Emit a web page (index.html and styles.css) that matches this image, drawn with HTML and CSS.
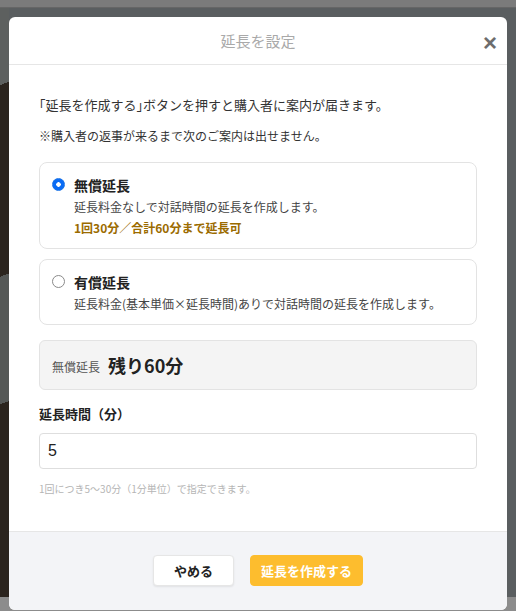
FILE: index.html
```html
<!DOCTYPE html>
<html lang="ja">
<head>
    <meta charset="UTF-8">
    <meta name="viewport" content="width=device-width, initial-scale=1.0">
    <title>延長を設定</title>
    <link rel="stylesheet" href="styles.css">
</head>
<body>
    <div class="backdrop">
        <div class="modal">
            <div class="modal-header">
                <h2>延長を設定</h2>
                <button class="close" aria-label="閉じる">&times;</button>
            </div>

            <div class="modal-body">
                <p class="lead"><span class="half">「</span>延長を作成する<span class="half">」</span>ボタンを押すと購入者に案内が届きます。</p>
                <p class="note">※購入者の返事が来るまで次のご案内は出せません。</p>

                <label class="option">
                    <input type="radio" name="kind" checked>
                    <span class="radio"></span>
                    <span class="option-text">
                        <span class="option-title">無償延長</span>
                        <span class="option-desc">延長料金なしで対話時間の延長を作成します。</span>
                        <span class="option-limit">1回30分／合計60分まで延長可</span>
                    </span>
                </label>

                <label class="option">
                    <input type="radio" name="kind">
                    <span class="radio"></span>
                    <span class="option-text">
                        <span class="option-title">有償延長</span>
                        <span class="option-desc">延長料金(基本単価×延長時間)ありで対話時間の延長を作成します。</span>
                    </span>
                </label>

                <div class="remain">
                    <span class="remain-label">無償延長</span>
                    <span class="remain-value">残り60分</span>
                </div>

                <label class="field-label" for="minutes">延長時間（分）</label>
                <input class="field" type="text" id="minutes" value="5">
                <p class="hint">1回につき5〜30分（1分単位）で指定できます。</p>
            </div>

            <div class="modal-footer">
                <button class="btn">やめる</button>
                <button class="btn btn-primary">延長を作成する</button>
            </div>
        </div>
    </div>
</body>
</html>
```

FILE: styles.css
```css
html, body {
    margin: 0;
    padding: 0;
}
body {
    font-family: "Noto Sans CJK JP", "Noto Sans", sans-serif;
    color: #333;
    background-color: #8a8a8a;
}
.backdrop {
    height: 611px;
    overflow: hidden;
    padding-top: 17px;
    box-sizing: border-box;
    background:
        linear-gradient(#7b7b7b 0, #7b7b7b 7px, #666 7px, #666 8px, transparent 8px),
        linear-gradient(#8c8c8c, #8c8c8c) 0 597px / 100% 14px no-repeat,
        linear-gradient(160deg, #5d605f 0, #5d605f 80px, #2b241e 80px, #2b241e 260px, #555857 260px, #555857 380px, #2b241e 380px) 0 0 / 9px 100% no-repeat,
        #5a5e60;
}
.modal {
    margin: 0 9px;
    background-color: #fff;
    border-radius: 6px;
    overflow: hidden;
}
.modal-header {
    position: relative;
    height: 47px;
    border-bottom: 1px solid #e6e6e6;
    display: flex;
    align-items: center;
    justify-content: center;
}
.modal-header h2 {
    margin: 0;
    font-size: 15px;
    font-weight: normal;
    color: #a9a9a9;
}
.close {
    position: absolute;
    right: 10px;
    top: 14px;
    border: none;
    background: none;
    padding: 0;
    font-family: "Liberation Sans", sans-serif;
    font-size: 24px;
    font-weight: bold;
    line-height: 24px;
    color: #6d6d6d;
    cursor: pointer;
}
.modal-body {
    padding: 30px 30px 34px;
}
.lead {
    margin: 0;
    font-size: 13px;
    line-height: 20px;
}
.half {
    font-feature-settings: "halt";
}
.note {
    margin: 11px 0 16px;
    font-size: 12px;
    line-height: 20px;
}
.option {
    display: flex;
    gap: 9px;
    border: 1px solid #e3e3e3;
    border-radius: 8px;
    padding: 13px 12px 10px;
    margin-bottom: 10px;
    cursor: pointer;
}
.option input {
    display: none;
}
.radio {
    flex: none;
    width: 11px;
    height: 11px;
    margin-top: 2px;
    border: 1px solid #8a8a8a;
    border-radius: 50%;
    background-color: #fff;
}
.option input:checked + .radio {
    border-color: #1a73e8;
    background: radial-gradient(circle, #fff 0, #fff 2px, #0a6cf5 2.5px);
}
.option-text {
    display: flex;
    flex-direction: column;
}
.option-title {
    font-size: 14px;
    font-weight: bold;
    line-height: 18px;
    color: #222;
}
.option-desc {
    margin-top: 3px;
    font-size: 12px;
    line-height: 20px;
    color: #444;
}
.option-limit {
    margin-top: 1px;
    font-size: 12px;
    font-weight: bold;
    line-height: 20px;
    color: #9b6b00;
}
.remain {
    margin-top: 15px;
    height: 48px;
    display: flex;
    align-items: center;
    gap: 8px;
    padding: 0 12px;
    background-color: #f4f4f4;
    border: 1px solid #e3e3e3;
    border-radius: 6px;
}
.remain-label {
    font-size: 12px;
    color: #555;
    margin-top: 2px;
}
.remain-value {
    font-size: 18px;
    font-weight: bold;
    color: #222;
}
.field-label {
    display: block;
    margin-top: 14px;
    font-size: 13px;
    font-weight: bold;
    line-height: 20px;
    color: #222;
}
.field {
    display: block;
    box-sizing: border-box;
    width: 100%;
    height: 36px;
    margin-top: 9px;
    padding: 0 8px;
    border: 1px solid #dedede;
    border-radius: 4px;
    font-family: "Liberation Sans", sans-serif;
    font-size: 16px;
    color: #222;
}
.hint {
    margin: 12px 0 0;
    font-size: 10px;
    line-height: 16px;
    color: #b5b5b5;
}
.modal-footer {
    border-top: 1px solid #e6e6e6;
    background-color: #f3f4f7;
    padding: 23px 0 24px;
    display: flex;
    justify-content: center;
    gap: 16px;
}
.btn {
    height: 31px;
    padding: 0 20px;
    font-family: inherit;
    font-size: 13px;
    font-weight: bold;
    color: #222;
    background-color: #fff;
    border: 1px solid #e6e6e6;
    border-radius: 4px;
    box-shadow: 0 1px 2px rgba(0, 0, 0, 0.08);
    cursor: pointer;
}
.btn-primary {
    padding: 0 10px;
    color: #fff;
    background-color: #fdbd2e;
    border-color: #fdbd2e;
    box-shadow: none;
}
```
